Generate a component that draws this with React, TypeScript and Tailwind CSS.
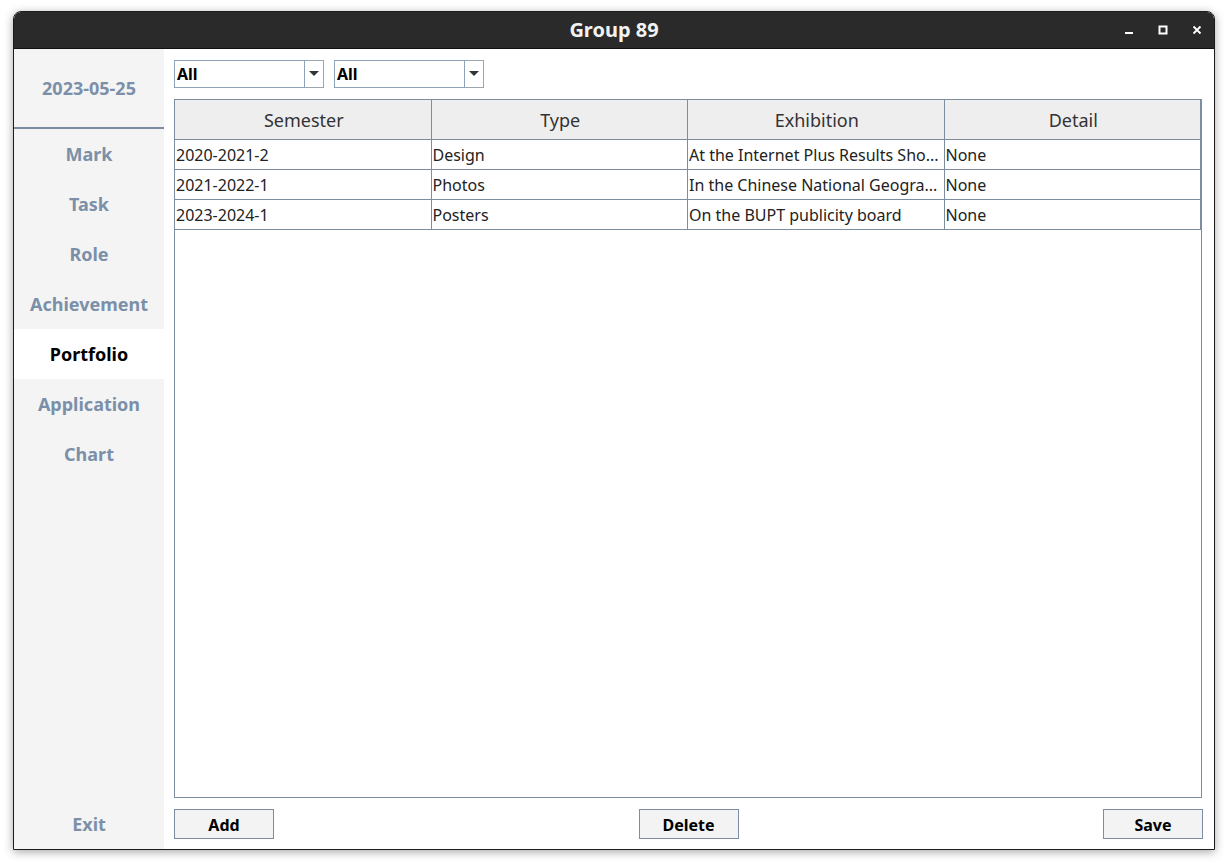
import React from "react";

const nav = ["Mark", "Task", "Role", "Achievement", "Portfolio", "Application", "Chart"];
const rows = [
  ["2020-2021-2", "Design", "At the Internet Plus Results Sho...", "None"],
  ["2021-2022-1", "Photos", "In the Chinese National Geogra...", "None"],
  ["2023-2024-1", "Posters", "On the BUPT publicity board", "None"],
];
const headers = ["Semester", "Type", "Exhibition", "Detail"];

function Combo() {
  return (
    <div className="flex h-[28px] w-[150px]">
      <div className="flex h-full w-[131px] items-center border border-[#8ea2b8] bg-white pl-[2px] text-[16px] font-bold text-black">
        All
      </div>
      <div className="flex h-full w-[19px] items-center justify-center border border-l-0 border-[#9aa6b2] bg-white">
        <svg width="10" height="6" viewBox="0 0 10 6">
          <path d="M0 0 L10 0 L5 5 Z" fill="#333" />
        </svg>
      </div>
    </div>
  );
}

function Btn({ label }: { label: string }) {
  return (
    <div className="flex h-[30px] w-[100px] items-center justify-center border border-[#7d8da0] bg-[#f3f3f3] pt-[2px] text-[16px] font-bold text-black">
      {label}
    </div>
  );
}

export default function App() {
  return (
    <div
      className="h-[866px] w-[1228px] bg-white pl-[13px] pt-[11px]"
      style={{ fontFamily: '"Noto Sans", "Open Sans", sans-serif' }}
    >
      <div className="flex h-[839px] w-[1202px] flex-col overflow-hidden rounded-t-[8px] border border-[#1c1c1c] shadow-[0_2px_10px_rgba(0,0,0,0.35)]">
        {/* Title bar */}
        <div className="relative flex h-[37px] shrink-0 items-center justify-center border-b border-[#111] bg-[#2a2a2a]">
          <span className="text-[20px] font-bold text-[#f2f2f2]">Group 89</span>
          <div className="absolute right-[12px] top-0 flex h-full items-center gap-[24px]">
            <svg width="10" height="10" viewBox="0 0 10 10">
              <rect x="1" y="7" width="8" height="2" fill="#fff" />
            </svg>
            <svg width="10" height="10" viewBox="0 0 10 10">
              <rect x="1.5" y="1.5" width="7" height="7" fill="none" stroke="#fff" strokeWidth="2" />
            </svg>
            <svg width="10" height="10" viewBox="0 0 10 10">
              <path d="M1.5 1.5 L8.5 8.5 M8.5 1.5 L1.5 8.5" stroke="#fff" strokeWidth="1.8" />
            </svg>
          </div>
        </div>
        {/* Body */}
        <div className="flex flex-1">
          {/* Sidebar */}
          <div className="flex w-[150px] shrink-0 flex-col bg-[#f4f4f4]">
            <div className="flex h-[78px] items-center justify-center text-[18px] font-bold text-[#7b90a8]">
              2023-05-25
            </div>
            <div className="h-[2px] bg-[#7a8da3]" />
            {nav.map((n) => (
              <div
                key={n}
                className={
                  n === "Portfolio"
                    ? "flex h-[50px] items-center justify-center bg-white text-[18px] font-bold text-black"
                    : "flex h-[50px] items-center justify-center text-[18px] font-bold text-[#7b90a8]"
                }
              >
                {n}
              </div>
            ))}
            <div className="flex-1" />
            <div className="flex h-[50px] items-center justify-center text-[18px] font-bold text-[#7b90a8]">
              Exit
            </div>
          </div>
          {/* Main */}
          <div className="flex flex-1 flex-col bg-white pb-[10px] pl-[10px] pr-[11px] pt-[11px]">
            <div className="flex gap-[10px]">
              <Combo />
              <Combo />
            </div>
            <div className="mr-[1px] mt-[11px] flex-1 border border-[#7d8da0] bg-white">
              <div className="grid h-[40px] grid-cols-4 border-b border-[#7d8da0] bg-[#eeeeee]">
                {headers.map((h) => (
                  <div
                    key={h}
                    className="flex items-center justify-center border-r border-[#7d8da0] pt-[2px] pl-[2px] text-[18px] text-[#333]"
                  >
                    {h}
                  </div>
                ))}
              </div>
              {rows.map((r, i) => (
                <div key={i} className="grid h-[30px] grid-cols-4 border-b border-[#7d8da0]">
                  {r.map((c, j) => (
                    <div
                      key={j}
                      className="flex items-center overflow-hidden whitespace-nowrap border-r border-[#7d8da0] pl-[1px] text-[16px] text-[#222]"
                    >
                      {c}
                    </div>
                  ))}
                </div>
              ))}
            </div>
            <div className="mt-[11px] flex justify-between">
              <Btn label="Add" />
              <Btn label="Delete" />
              <Btn label="Save" />
            </div>
          </div>
        </div>
      </div>
    </div>
  );
}
